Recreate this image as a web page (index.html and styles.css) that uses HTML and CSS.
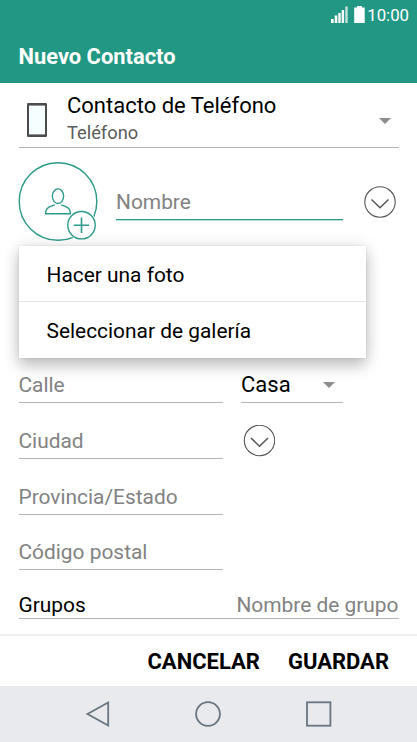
FILE: index.html
```html
<!DOCTYPE html>
<html lang="es">
<head>
<meta charset="utf-8">
<meta name="viewport" content="width=device-width, initial-scale=1">
<title>Nuevo Contacto</title>
<link rel="stylesheet" href="styles.css">
</head>
<body>
<div class="screen">
  <header class="header">
    <div class="status">
      <svg class="signal" width="18" height="17" viewBox="0 0 18 17"><path fill="#fff" d="M0 13h2.600v4H0zM3.700 9.500h2.600V17H3.700zM7.300 7h2.400v10H7.300zM10.700 4h2.400v13h-2.400z"/><path fill="#c2e2dc" d="M14.300 0.500h2.400V17h-2.400z"/></svg>
      <svg class="battery" width="11" height="17" viewBox="0 0 11 17"><path fill="#fff" d="M3 0h5v1.500h2.700V17H.2V1.500H3z"/></svg>
      <span class="clock">10:00</span>
    </div>
    <h1 class="title">Nuevo Contacto</h1>
  </header>

  <main class="form">
    <section class="account">
      <svg class="phone" width="20" height="34" viewBox="0 0 20 34"><rect width="20" height="34" rx="1.200" fill="#4c4c4c"/><rect x="2" y="2.600" width="16" height="28.800" fill="#f5ffff"/></svg>
      <div class="account-text">
        <span class="account-name">Contacto de Teléfono</span>
        <span class="account-type">Teléfono</span>
      </div>
      <svg class="caret" width="12" height="6" viewBox="0 0 12 6"><path fill="#8c8c8c" d="M0 0h12L6 6z"/></svg>
    </section>

    <section class="identity">
      <svg class="avatar" width="80" height="80" viewBox="0 0 80 80" fill="none" stroke="#2c9a88" stroke-width="1.400">
        <circle cx="40" cy="39.500" r="38.800"/>
        <ellipse cx="40" cy="34.200" rx="5.600" ry="7.300"/>
        <path d="M36.800 43C32 44.500 27.700 45.700 27.700 50v1.700h24.600V50c0-4.300-4.300-5.500-9.100-7"/>
        <circle cx="63.500" cy="63.200" r="15" fill="#fff" stroke="none"/>
        <circle cx="63.500" cy="63.200" r="13.700" fill="#fff"/>
        <path d="M63.500 55.500v15.400M55.800 63.200h15.400" stroke-width="1.600"/>
      </svg>
      <div class="field name-field">Nombre</div>
      <svg class="expand" width="32" height="32" viewBox="0 0 32 32" fill="none" stroke="#555" stroke-width="1.100"><circle cx="16" cy="16" r="15.200"/><path stroke-width="1.500" d="M7.500 13.500L16 21.800l8.500-8.300"/></svg>
    </section>

    <section class="address">
      <div class="fields">
        <div class="field">Calle</div>
        <div class="field">Ciudad</div>
        <div class="field">Provincia/Estado</div>
        <div class="field">Código postal</div>
      </div>
      <div class="kind">
        <div class="field select">Casa<svg class="caret" width="12" height="6" viewBox="0 0 12 6"><path fill="#8c8c8c" d="M0 0h12L6 6z"/></svg></div>
        <svg class="expand" width="32" height="32" viewBox="0 0 32 32" fill="none" stroke="#555" stroke-width="1.100"><circle cx="16.500" cy="15.500" r="15.200"/><path stroke-width="1.500" d="M8 13L16.500 21.300l8.500-8.300"/></svg>
      </div>
    </section>

    <section class="field groups"><span class="groups-label">Grupos</span><span>Nombre de grupo</span></section>
  </main>

  <footer class="actions"><span class="cancel">CANCELAR</span><span class="save">GUARDAR</span></footer>

  <nav class="navbar">
    <svg width="26" height="28" viewBox="0 0 26 28"><path d="M23.200 2.500v23L2.500 14z"/></svg>
    <svg width="28" height="28" viewBox="0 0 28 28"><circle cx="14" cy="14" r="11.900"/></svg>
    <svg width="28" height="28" viewBox="0 0 28 28"><rect x="2" y="2.300" width="23.400" height="23.400"/></svg>
  </nav>

  <div class="menu">
    <div class="menu-item">Hacer una foto</div>
    <div class="menu-item">Seleccionar de galería</div>
  </div>
</div>
</body>
</html>
```
FILE: styles.css
```css
* { box-sizing: border-box; }

body {
  margin: 0;
  font: 22px/26px Roboto, sans-serif;
  color: #000;
  background: #fff;
}

svg { display: block; flex: none; }

.screen {
  position: relative;
  display: flex;
  flex-direction: column;
  width: 417px;
  height: 742px;
  overflow: hidden;
}

.header { height: 83px; background: #229783; color: #fff; }

.status {
  display: flex;
  justify-content: flex-end;
  padding: 6px 8px 0 0;
  height: 43px;
}

.battery { margin: 0 2px 0 5px; }

.clock { font-size: 16.800px; line-height: 18px; }

.title {
  margin: 0 0 0 18.500px;
  font-size: 21.900px;
  line-height: 28px;
  font-weight: 700;
}

.form { display: flex; flex-direction: column; height: 551px; padding: 0 18.500px; }

.account {
  display: flex;
  align-items: center;
  height: 65px;
  padding: 9px 8px 1px 8.500px;
  border-bottom: 1px solid #b5b5b5;
}

.phone { margin-top: 2px; }

.account-text { display: flex; flex: 1; flex-direction: column; margin-left: 20px; }

.account-name { line-height: 26px; }

.account-type { font-size: 18.300px; line-height: 27px; color: #5c5c5c; }

.account .caret { margin-top: 3px; }

.identity { display: flex; height: 153px; padding-top: 14px; }

.avatar { margin: 0 18px 0 -.5px; }

.field {
  display: flex;
  align-items: flex-end;
  border-bottom: 1px solid #b5b5b5;
  padding-bottom: 4px;
  font-size: 20.900px;
  color: #828282;
}

.name-field {
  width: 227px;
  height: 58px;
  margin-right: 21px;
  padding-bottom: 4px;
  border-bottom: 1px solid #2f9986;
  box-shadow: 0 1px #b5dcd5;
}

.identity .expand { margin-top: 24px; }

.address { display: flex; gap: 18.500px; height: 269px; }

.fields { display: grid; grid-template-rows: 102px 56px 56px 55px; width: 204px; }

.kind { width: 102px; }

.select {
  height: 102px;
  justify-content: space-between;
  padding-right: 8px;
  font-size: 22px;
  color: #000;
}

.select .caret { margin-bottom: 10px; }

.kind .expand { margin: 22px 0 0 2px; }

.groups { justify-content: space-between; height: 49px; padding-bottom: .5px; }

.groups-label { color: #000; }

.actions {
  display: flex;
  justify-content: flex-end;
  align-items: center;
  gap: 28px;
  height: 52px;
  padding: 2px 28px 0 0;
  border-top: 2px solid #f0f0f0;
  font-weight: 700;
}

.navbar {
  display: flex;
  align-items: center;
  gap: 83px;
  height: 56px;
  padding-left: 85px;
  background: #e8eaee;
}

.navbar svg { fill: none; stroke: #69767f; stroke-width: 1.800; }

.menu {
  position: absolute;
  left: 18.500px;
  top: 246px;
  width: 347.500px;
  height: 112px;
  background: #fff;
  font-size: 20.900px;
  box-shadow: 0 8px 14px rgba(0, 0, 0, .22), 0 0 16px rgba(0, 0, 0, .1), 0 0 2px rgba(0, 0, 0, .1);
}

.menu-item { height: 55px; padding: 15.500px 28px; }

.menu-item + .menu-item { height: 57px; border-top: 1px solid #e6e6e6; padding-top: 15.500px; }
```
